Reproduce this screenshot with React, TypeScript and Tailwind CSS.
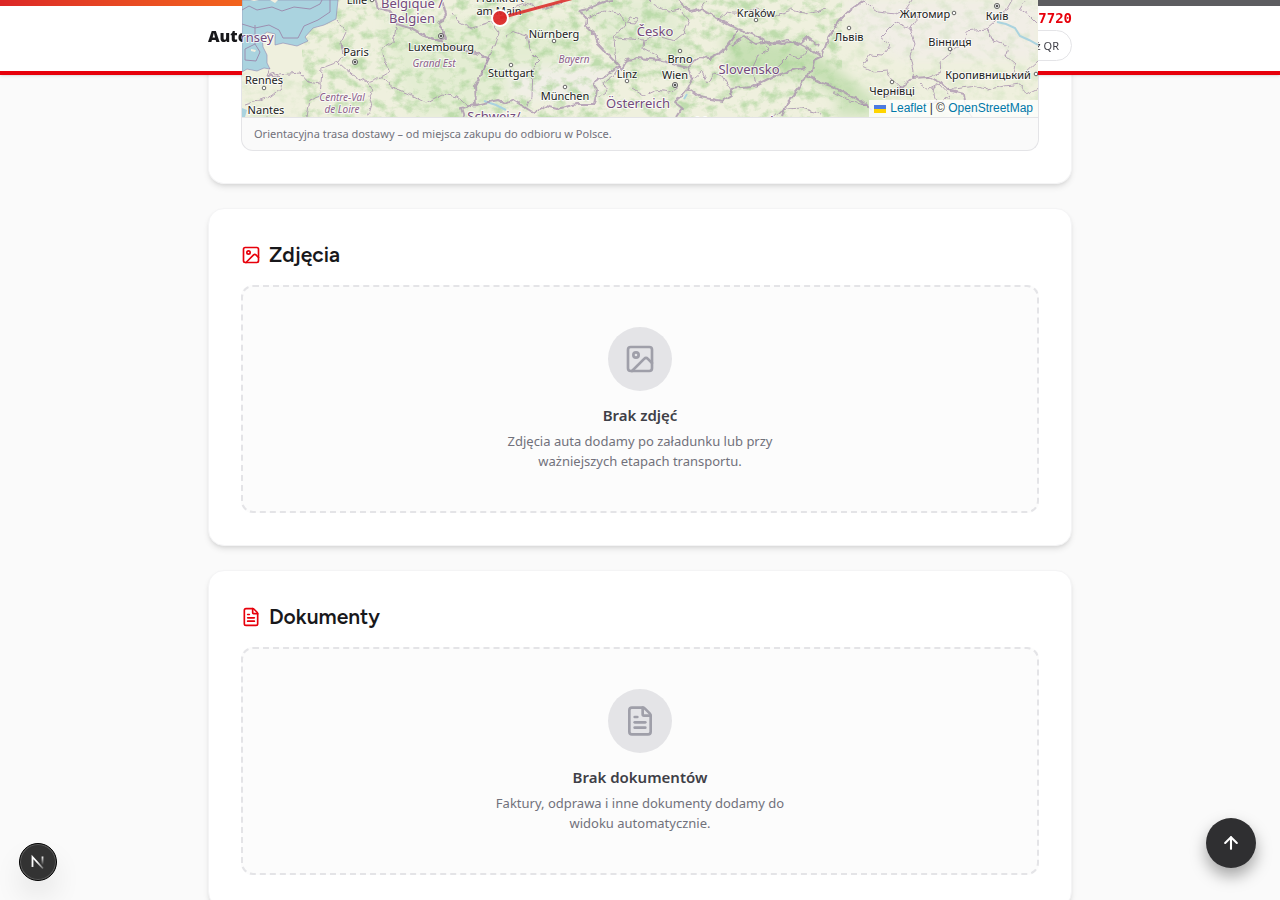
import type { ReactNode } from 'react'
import { ArrowUp, FileText, Image as ImageIcon, type LucideIcon } from 'lucide-react'

type Label = { text: string; x: number; y: number; dot?: [number, number]; capital?: boolean }

const cities: Label[] = [
  { text: 'Lille', x: 115, y: 4, dot: [130, 0] },
  { text: 'Paris', x: 114, y: 56, dot: [113, 62], capital: true },
  { text: 'Rennes', x: 22, y: 84, dot: [22, 88] },
  { text: 'Nantes', x: 24, y: 114, dot: [25, 119] },
  { text: 'Luxembourg', x: 199, y: 51, dot: [199, 36], capital: true },
  { text: 'Frankfurt', x: 258, y: 2 },
  { text: 'am Main', x: 257, y: 15 },
  { text: 'Nürnberg', x: 312, y: 38, dot: [312, 41] },
  { text: 'Stuttgart', x: 269, y: 77, dot: [269, 65] },
  { text: 'München', x: 323, y: 100, dot: [323, 87] },
  { text: 'Linz', x: 385, y: 78, dot: [385, 81] },
  { text: 'Wien', x: 433, y: 79, dot: [433, 85], capital: true },
  { text: 'Brno', x: 438, y: 63, dot: [438, 51] },
  { text: 'Kraków', x: 514, y: 17, dot: [514, 20] },
  { text: 'Львів', x: 607, y: 41, dot: [607, 28] },
  { text: 'Житомир', x: 683, y: 18, dot: [712, 13] },
  { text: 'Київ', x: 755, y: 20, dot: [755, 6], capital: true },
  { text: 'Вінниця', x: 708, y: 46, dot: [708, 49] },
  { text: 'Кропивницький', x: 746, y: 79, dot: [794, 74] },
  { text: 'Чернівці', x: 650, y: 95, dot: [650, 82] },
]

const countries: Label[] = [
  { text: 'rnsey', x: 15, y: 42 },
  { text: 'Belgique /', x: 170, y: 8 },
  { text: 'Belgien', x: 170, y: 23 },
  { text: 'Česko', x: 413, y: 36 },
  { text: 'Slovensko', x: 507, y: 74 },
  { text: 'Österreich', x: 396, y: 108 },
  { text: 'Schweiz/', x: 252, y: 121 },
  { text: 'Magyarország', x: 497, y: 126 },
]

const regions: Label[] = [
  { text: 'Grand Est', x: 192, y: 67 },
  { text: 'Bayern', x: 332, y: 63 },
  { text: 'Centre-Val', x: 100, y: 101 },
  { text: 'de Loire', x: 100, y: 113 },
]

const thickBorders = [
  'M133 0 136 8 148 11 155 24 170 29 181 35 197 41 204 38 197 24 204 15 200 0',
  'M181 35 197 41 218 50 234 53 247 58 240 73 233 86 234 105 219 108 222 117',
  'M234 105 243 103 256 100 264 104 271 100 284 108 292 113 304 106 315 109 335 104 352 104 355 91 351 83 364 75 378 66',
  'M337 10 345 19 344 26 353 34 356 44 374 63 380 69 385 60 396 58 417 60 434 65 446 68 451 79 446 88',
  'M337 10 347 8 365 1 372 0',
  'M436 0 448 12 459 9 476 19 497 30 490 40 481 51 468 58 456 57 446 68',
  'M446 88 458 97 480 101 490 95 489 89 510 87 530 77 548 71 564 67',
  'M497 30 517 37 528 44 546 40 556 45 565 37 577 46',
  'M622 0 608 10 596 22 587 36 580 56 572 60 570 72 564 75 580 83 592 87 606 95 618 100 630 110',
  'M490 45 502 36 514 44 528 42 540 44 555 42 566 48 578 56',
  'M564 75 556 90 545 103 540 117',
  'M643 98 659 88 670 78 686 77 699 82 706 90 722 94 724 108 730 117',
  'M446 88 438 98 432 102 440 108 434 117',
]

const thinBorders = [
  'M95 20 104 32 99 43 101 55 96 62 110 75 125 82 138 77 147 72 142 60 140 49 151 42 155 24',
  'M28 69 25 76 33 73 40 80 39 88 29 96 18 100 3 105',
  'M25 76 58 73 66 82 79 84 80 68 96 62',
  'M79 84 78 96 68 100 65 117',
  'M125 82 131 90 127 96 130 104 126 117',
  'M138 77 152 88 167 94 184 103 200 94 215 97 229 108',
  'M240 73 247 58 252 46 257 32 249 22 230 28 218 22 210 12',
  'M264 36 272 32 285 36 289 52 298 61 291 68 290 97 284 108',
  'M249 22 262 20 267 10 282 4 302 9 320 2',
  'M378 66 371 76 362 83 364 92 356 98',
  'M345 19 362 10 379 14 384 24 372 38 374 63',
  'M374 38 402 40 416 36 432 41 442 33 447 20 438 10 427 12 411 4 407 0',
  'M402 40 401 48 414 55 417 60',
  'M385 23 389 17 396 18 392 24 385 23',
  'M458 9 465 0 M476 19 484 12 500 14 516 9 530 17 549 10 566 14 584 9',
  'M517 37 527 50 516 56 510 69 515 87',
  'M391 89 402 96 415 90 427 92 436 86',
  'M451 79 460 71 466 84 472 73 480 76 486 86 490 95',
  'M530 77 536 66 547 55 558 58 565 50',
  'M622 0 636 12 653 14 664 9 676 18 668 28 653 22 638 37 648 45 640 56 628 55 621 66 633 72 645 71 649 79 659 88',
  'M664 9 670 0 M668 28 673 44 668 56 671 70 670 78',
  'M723 31 722 41 710 52 698 62 699 72 686 77',
  'M723 31 745 29 752 41 766 46 764 56 773 64 771 76 782 74 796 61',
  'M752 41 745 29 762 14 770 0 M784 0 778 9 788 16 796 24',
  'M706 90 734 86 745 90 762 86 779 84 784 94 796 88',
  'M678 84 686 90 697 84 708 96 700 102 710 112 M690 88 695 101 684 104',
  'M530 117 545 109 560 108 578 114 M591 92 604 99 622 104 628 109',
]

const labelText = { paintOrder: 'stroke', stroke: '#fff', strokeOpacity: 0.75, strokeWidth: 2, strokeLinejoin: 'round' } as const

function RouteMap() {
  return (
    <svg className="block h-full w-full" viewBox="0 0 796 117" preserveAspectRatio="xMidYMid slice" role="img" aria-label="Mapa trasy dostawy">
      <defs>
        {/* woodland: uneven green patches over the land colour */}
        <filter id="woods" x="0" y="0" width="100%" height="100%" colorInterpolationFilters="sRGB">
          <feTurbulence type="fractalNoise" baseFrequency="0.08 0.1" numOctaves="5" seed="8" />
          <feColorMatrix values="0 0 0 0 0.69  0 0 0 0 0.84  0 0 0 0 0.62  3 0 0 0 -1.35" />
          <feComposite in2="SourceGraphic" operator="in" />
        </filter>
        <filter id="soft" x="-20%" y="-20%" width="140%" height="140%">
          <feGaussianBlur stdDeviation="6" />
        </filter>
        {/* ragged edges for the borders and the coast */}
        <filter id="ragged" x="-2%" y="-5%" width="104%" height="110%">
          <feTurbulence type="fractalNoise" baseFrequency="0.15" numOctaves="2" seed="3" />
          <feDisplacementMap in="SourceGraphic" scale="5" xChannelSelector="R" yChannelSelector="G" />
        </filter>
      </defs>
      <rect width="796" height="117" fill="#eff0de" />
      <g filter="url(#soft)">
        <path d="M140 20H330L345 60 300 70 240 117H170Z" fill="#e4edd3" />
        <path d="M337 0H430L450 60 380 65Z" fill="#e3ecd3" />
        <path d="M265 66H370L350 100 270 98Z" fill="#f0efe6" />
        <path d="M600 0H796V60H660L620 40Z" fill="#f1eee6" />
        <path d="M480 35 560 45 590 65 640 105 620 112 560 75 490 80Z" fill="#c8e0b5" />
        <path d="M600 98H640V117H590Z" fill="#cfe3bd" />
      </g>
      <path d="M60 0H600V117H60Z" fill="#000" filter="url(#woods)" opacity="0.75" />
      <path d="M600 0H796V117H600Z M0 72H60V117H0Z" fill="#000" filter="url(#woods)" opacity="0.25" />
      <path d="M0 0H96L94 19 82 25 71 28 63 37 66 41 55 46 41 43 33 45 33 34 25 32 20 36 21 47 25 55 25 63 28 69 22 68 15 71 5 69 0 72Z" fill="#aad3df" stroke="#8e87b0" strokeWidth="0.6" />
      <path d="M0 108 5 110 3 117H0Z" fill="#aad3df" />
      <path d="M8 0 12 1 17 0Z M28 0 33 3 36 0Z M9 49 14 50 13 52 9 51Z" fill="#f2efe0" />
      <path d="M755 22 764 24 773 28 778 36 787 40 796 45" fill="none" stroke="#aad3df" strokeWidth="2" />
      <path d="M242 101 254 105 264 110M442 99 445 94" fill="none" stroke="#aad3df" strokeWidth="2" />
      <g fill="none" stroke="#9a83a8" strokeWidth="1" opacity="0.85">
        <path d="M0 10 7 6 15 10 30 7 40 11 52 7 68 9 78 4 80 0" />
        <path d="M88 0V12L76 20 62 26 56 38 41 38 37 30 27 25 13 28 0 24M13 25V44M3 49 13 44 18 52 14 61 3 60Z" />
      </g>
      <g fill="none" stroke="#a890ae" strokeLinejoin="round" filter="url(#ragged)">
        <g strokeWidth="2" opacity="0.75">
          {thickBorders.map((d) => <path key={d} d={d} />)}
        </g>
        <g strokeWidth="1" opacity="0.8">
          {thinBorders.map((d) => <path key={d} d={d} />)}
        </g>
      </g>
      <g fontFamily="'Noto Sans', sans-serif" textAnchor="middle">
        <g fontSize="13" fill="#734a7c">
          {countries.map((c) => <text key={c.text} x={c.x} y={c.y} {...labelText}>{c.text}</text>)}
        </g>
        <g fontSize="10" fontStyle="italic" fill="#8d618b">
          {regions.map((r) => <text key={r.text} x={r.x} y={r.y} {...labelText}>{r.text}</text>)}
        </g>
        <g fontSize="11" fill="#222">
          {cities.map((c) => <text key={c.text} x={c.x} y={c.y} {...labelText}>{c.text}</text>)}
        </g>
      </g>
      {cities.map((c) => c.dot && (
        <g key={c.text} stroke="#444" strokeWidth="0.8" fill="#fff">
          <circle cx={c.dot[0]} cy={c.dot[1]} r={c.capital ? 2.6 : 1.8} />
          {c.capital && <circle cx={c.dot[0]} cy={c.dot[1]} r="1" fill="#444" />}
        </g>
      ))}
      <path d="M258 18 332 -2" stroke="#dc2626" strokeWidth="3" opacity="0.85" />
      <circle cx="258" cy="18" r="8" fill="#dc2626" fillOpacity="0.93" stroke="#fff" strokeWidth="2" />
    </svg>
  )
}

function Header() {
  return (
    <header className="fixed inset-x-0 top-0 z-10 border-b-4 border-[#e7000b] bg-white shadow-sm">
      <div className="mx-auto flex max-w-4xl items-center justify-between px-4 py-[10px]">
        <span className="font-['Open_Sans',sans-serif] text-base leading-5 font-extrabold text-[#18181b]">Auto</span>
        <div className="flex flex-col items-end gap-1">
          <span className="font-['DejaVu_Sans_Mono',monospace] text-sm leading-4 font-bold text-[#e7000b]">7720</span>
          <button type="button" className="rounded-full border border-zinc-200 bg-white px-3 py-[6px] text-[11px] leading-[17px] text-zinc-700">
            Pokaż QR
          </button>
        </div>
      </div>
      <div className="absolute inset-x-0 top-0 h-[6px] bg-[#5d5d60]">
        <div className="h-full w-1/2 bg-linear-to-r from-[#dc2626] via-[#f97316] to-[#f97316]" />
      </div>
    </header>
  )
}

function Card({ icon: Icon, title, children }: { icon: LucideIcon; title: string; children: ReactNode }) {
  return (
    <section className="rounded-2xl border border-zinc-100 bg-white p-8 shadow-md">
      <h2 className="mb-4 flex items-center gap-2 font-['Figtree','Inter',sans-serif] text-[21px] leading-7 font-semibold text-[#18181b]">
        <Icon className="size-5 text-[#e7000b]" />
        {title}
      </h2>
      {children}
    </section>
  )
}

function EmptyState({ icon: Icon, title, text }: { icon: LucideIcon; title: string; text: string }) {
  return (
    <div className="flex flex-col items-center rounded-xl border-2 border-dashed border-zinc-200 bg-[#fcfcfc] p-10 text-center">
      <div className="flex size-16 items-center justify-center rounded-full bg-zinc-200">
        <Icon className="size-8 text-zinc-400" />
      </div>
      <p className="mt-3 text-[15px] leading-6 font-semibold text-zinc-700">{title}</p>
      <p className="mt-1 max-w-xs text-[13px] leading-5 text-zinc-500">{text}</p>
    </div>
  )
}

export default function App() {
  return (
    <div className="h-screen overflow-hidden bg-[#fafafa] font-['Noto_Sans',sans-serif]">
      <Header />
      <main className="mx-auto flex max-w-4xl flex-col gap-6 px-4">
        <section className="rounded-b-2xl border border-t-0 border-zinc-100 bg-white px-8 pb-8 shadow-md">
          <div className="rounded-b-xl border border-t-0 border-zinc-200 bg-[#fafafa]">
            {/* the map stays above the sticky header */}
            <div className="relative z-20 h-[117px] overflow-hidden">
              <RouteMap />
              <div className="absolute right-0 bottom-0 flex items-center gap-1 bg-white/80 px-[5px] font-['Liberation_Sans',sans-serif] text-xs leading-[17px] text-[#333]">
                <svg className="h-2 w-3" viewBox="0 0 12 8" aria-hidden="true">
                  <path fill="#4C7BE1" d="M0 0h12v4H0z" />
                  <path fill="#FFD500" d="M0 4h12v4H0z" />
                </svg>
                <span>
                  <a href="#leaflet" className="text-[#0078a8]">Leaflet</a> | © <a href="#osm" className="text-[#0078a8]">OpenStreetMap</a>
                </span>
              </div>
            </div>
            <p className="border-t border-zinc-200 px-3 py-2 text-[11px] leading-4 text-zinc-500">
              Orientacyjna trasa dostawy – od miejsca zakupu do odbioru w Polsce.
            </p>
          </div>
        </section>

        <Card icon={ImageIcon} title="Zdjęcia">
          <EmptyState icon={ImageIcon} title="Brak zdjęć" text="Zdjęcia auta dodamy po załadunku lub przy ważniejszych etapach transportu." />
        </Card>

        <Card icon={FileText} title="Dokumenty">
          <EmptyState icon={FileText} title="Brak dokumentów" text="Faktury, odprawa i inne dokumenty dodamy do widoku automatycznie." />
        </Card>
      </main>

      <button type="button" aria-label="Do góry" className="fixed right-6 bottom-8 flex size-[50px] items-center justify-center rounded-full bg-[#2f2f31] text-white shadow-[0_8px_16px_rgba(0,0,0,0.35)]">
        <ArrowUp className="size-5" strokeWidth={2.5} />
      </button>

      <button type="button" aria-label="Dev tools" className="fixed bottom-[19px] left-[19px] flex size-[38px] items-center justify-center rounded-full border border-black bg-[#333] shadow-[0_16px_32px_-8px_rgba(0,0,0,0.24)] inset-ring inset-ring-white/20">
        <svg className="size-5" viewBox="0 0 20 20" fill="none" aria-hidden="true">
          <defs>
            <linearGradient id="diag" x1="10" y1="9" x2="16" y2="17" gradientUnits="userSpaceOnUse">
              <stop stopColor="#fff" />
              <stop offset="1" stopColor="#fff" stopOpacity="0.2" />
            </linearGradient>
            <linearGradient id="stem" x1="15" y1="4" x2="15" y2="13" gradientUnits="userSpaceOnUse">
              <stop stopColor="#fff" />
              <stop offset="1" stopColor="#fff" stopOpacity="0" />
            </linearGradient>
          </defs>
          <path d="M4.500 15V5L15 16.500" stroke="url(#diag)" strokeWidth="1.800" />
          <path d="M14.500 4.500V13" stroke="url(#stem)" strokeWidth="1.800" />
        </svg>
      </button>
    </div>
  )
}
